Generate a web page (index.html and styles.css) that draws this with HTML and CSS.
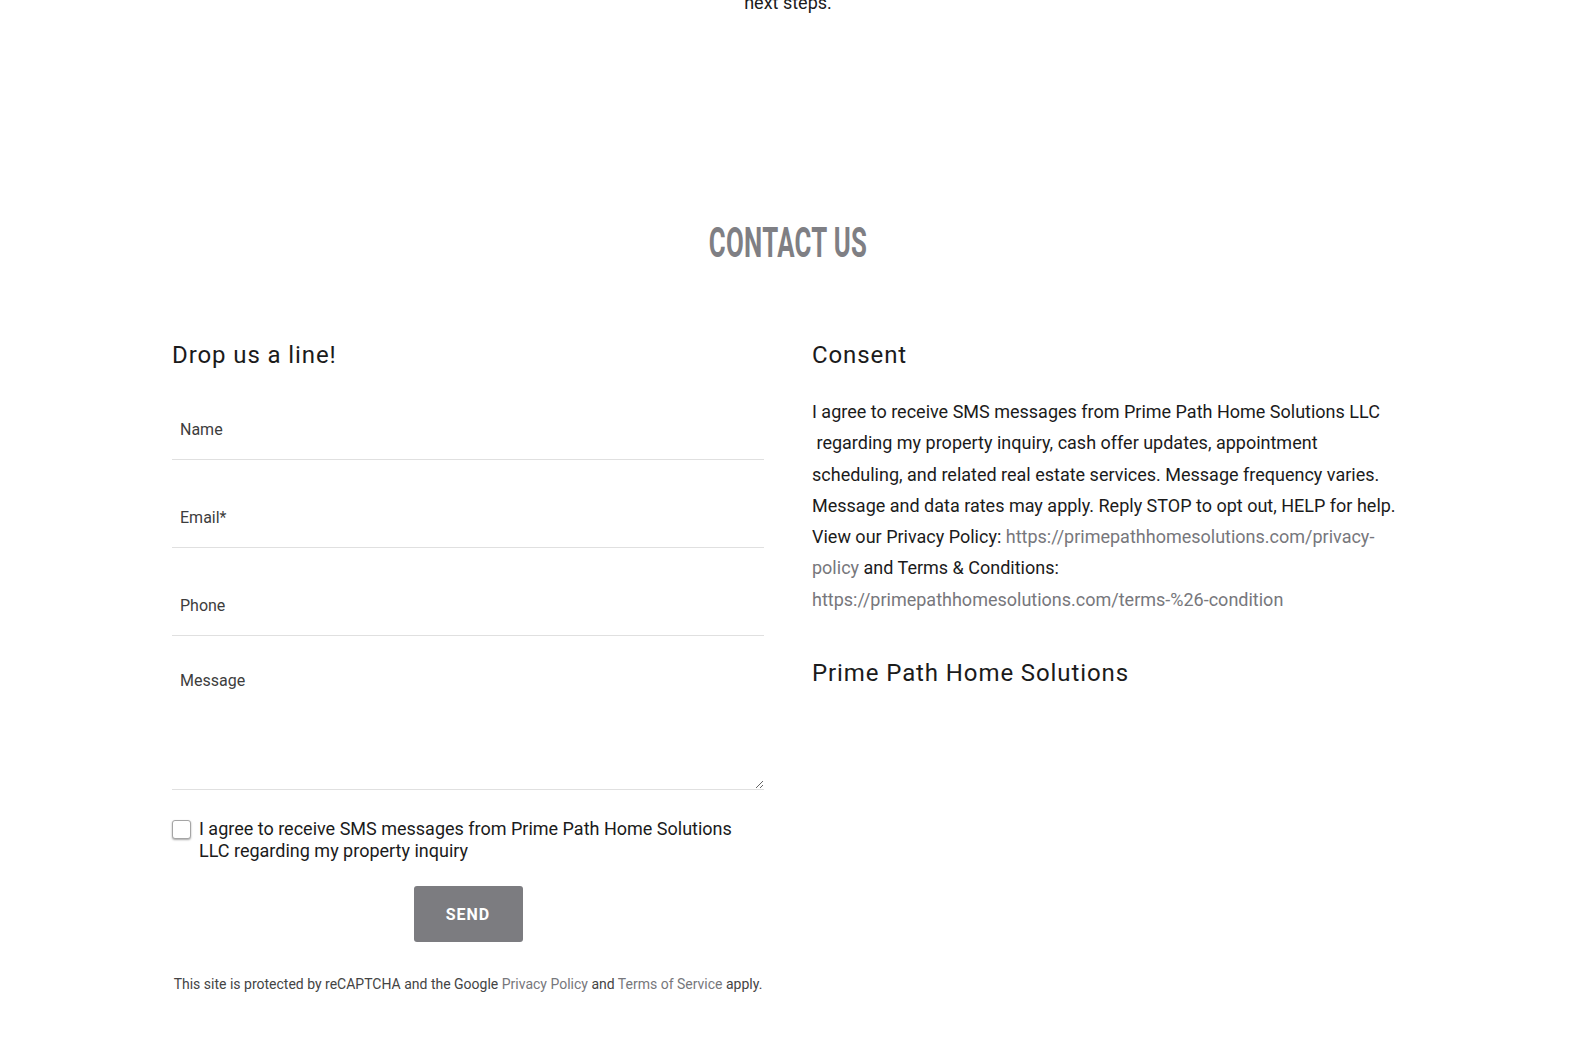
FILE: index.html
```html
<!DOCTYPE html>
<html lang="en">
<head>
<meta charset="utf-8">
<title>Contact Us</title>
<link rel="stylesheet" href="styles.css">
</head>
<body>
<div class="page">
  <p class="intro">next steps.</p>
  <h2 class="section-title"><span class="section-title-text">CONTACT US</span></h2>
  <div class="contact-grid">
    <form class="contact-form">
      <h3 class="col-heading">Drop us a line!</h3>
      <input class="field" type="text" placeholder="Name">
      <input class="field" type="email" placeholder="Email*">
      <input class="field" type="tel" placeholder="Phone">
      <textarea class="field field-message" placeholder="Message"></textarea>
      <label class="consent-check">
        <input class="checkbox" type="checkbox">
        <span class="consent-check-text">I agree to receive SMS messages from Prime Path Home Solutions LLC regarding my property inquiry</span>
      </label>
      <div class="actions">
        <button class="send-btn" type="button">SEND</button>
      </div>
      <p class="recaptcha">This site is protected by reCAPTCHA and the Google <a href="#">Privacy Policy</a> and <a href="#">Terms of Service</a> apply.</p>
    </form>
    <div class="consent-col">
      <h3 class="col-heading">Consent</h3>
      <p class="consent-text">I agree to receive SMS messages from Prime Path Home Solutions LLC &nbsp;regarding my property inquiry, cash offer updates, appointment scheduling, and related real estate services. Message frequency varies. Message and data rates may apply. Reply STOP to opt out, HELP for help. View our Privacy Policy: <a href="#">https://primepathhomesolutions.com/privacy-policy</a> and Terms &amp; Conditions: <a href="#">https://primepathhomesolutions.com/terms-%26-condition</a></p>
      <h3 class="col-heading company">Prime Path Home Solutions</h3>
    </div>
  </div>
</div>
</body>
</html>
```
FILE: styles.css
```css
html, body {
  margin: 0;
  padding: 0;
  background: #ffffff;
}

body {
  padding-right: 6px;
  font-family: Roboto, "Liberation Sans", Arial, sans-serif;
  color: #1b1b1b;
  overflow: hidden;
}

.page {
  width: 1232px;
  margin: 0 auto;
}

.intro {
  margin: -13px 0 0;
  font-size: 18px;
  line-height: 32px;
  text-align: center;
  color: #1b1b1b;
}

.section-title {
  margin: 199px 0 0;
  text-align: center;
  font-size: 43px;
  line-height: 48px;
  font-weight: 700;
  color: #7f7f84;
}

.section-title-text {
  display: inline-block;
  transform: scaleX(0.6);
  letter-spacing: 0.5px;
}

.contact-grid {
  display: grid;
  grid-template-columns: 592px 592px;
  column-gap: 48px;
  margin-top: 73px;
}

.col-heading {
  margin: 0;
  font-size: 24px;
  line-height: 32px;
  font-weight: 400;
  letter-spacing: 0.9px;
  color: #1b1b1b;
}

.contact-form {
  display: flex;
  flex-direction: column;
}

.field {
  display: block;
  box-sizing: border-box;
  width: 100%;
  height: 60px;
  margin: 28px 0 0;
  padding: 0 8px;
  border: 0;
  border-bottom: 1px solid #e0e0e0;
  background: transparent;
  font-family: Roboto, "Liberation Sans", Arial, sans-serif;
  font-size: 16px;
  color: #333;
  outline: none;
  border-radius: 0;
}

.contact-form .col-heading + .field {
  margin-top: 29px;
}

.field::placeholder {
  color: #3d3d3d;
  opacity: 1;
}

.field-message {
  height: 126px;
  padding: 7px 8px;
  line-height: 20px;
  resize: vertical;
}

.consent-check {
  display: flex;
  align-items: flex-start;
  gap: 8px;
  margin-top: 28px;
  font-size: 18px;
  line-height: 22px;
  color: #1b1b1b;
}

.checkbox {
  -webkit-appearance: none;
  appearance: none;
  flex: 0 0 auto;
  width: 19px;
  height: 19px;
  margin: 2px 0 0;
  border: 1px solid #a5a5a5;
  border-radius: 3px;
  background: #fff;
  box-shadow: 0 1px 2px rgba(0, 0, 0, 0.35);
}

.actions {
  display: flex;
  justify-content: center;
  margin-top: 24px;
}

.send-btn {
  width: 109px;
  height: 56px;
  border: 0;
  border-radius: 3px;
  background: #7c7c80;
  color: #ffffff;
  font-family: Roboto, "Liberation Sans", Arial, sans-serif;
  font-size: 16px;
  font-weight: 700;
  letter-spacing: 1px;
  cursor: pointer;
}

.recaptcha {
  margin: 32px 0 0;
  font-size: 14px;
  line-height: 20px;
  text-align: center;
  color: #444;
}

.recaptcha a,
.consent-text a {
  color: #77777c;
  text-decoration: none;
}

.consent-text {
  margin: 25px 0 0;
  font-size: 18px;
  line-height: 31.3px;
  color: #1b1b1b;
}

.col-heading.company {
  margin-top: 42px;
}
```
